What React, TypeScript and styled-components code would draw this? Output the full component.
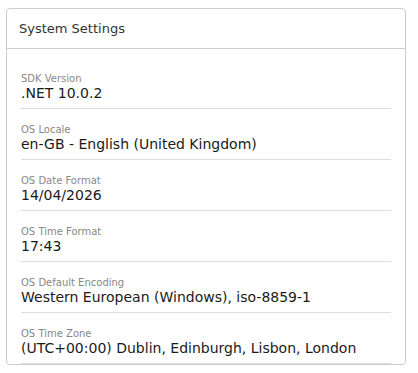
import { createGlobalStyle, styled } from 'styled-components';

interface Setting {
  label: string;
  value: string;
}

const settings: Setting[] = [
  { label: 'SDK Version', value: '.NET 10.0.2' },
  { label: 'OS Locale', value: 'en-GB - English (United Kingdom)' },
  { label: 'OS Date Format', value: '14/04/2026' },
  { label: 'OS Time Format', value: '17:43' },
  { label: 'OS Default Encoding', value: 'Western European (Windows), iso-8859-1' },
  { label: 'OS Time Zone', value: '(UTC+00:00) Dublin, Edinburgh, Lisbon, London' },
];

const App = () => {
  return (
    <>
      <GlobalStyle />
      <MyPanel>
        <MyPanelHeader>System Settings</MyPanelHeader>
        <MyPanelBody>
          {settings.map((setting) => (
            <MySettingRow key={setting.label}>
              <MySettingLabel>{setting.label}</MySettingLabel>
              <MySettingValue>{setting.value}</MySettingValue>
            </MySettingRow>
          ))}
        </MyPanelBody>
      </MyPanel>
    </>
  );
};

const GlobalStyle = createGlobalStyle`
  body {
    margin: 0;
    background: #ffffff;
    font-family: 'DejaVu Sans', 'Liberation Sans', sans-serif;
  }
`;

const MyPanel = styled.section`
  width: 400px;
  margin: 8px 0 0 6px;
  box-sizing: border-box;
  border: 1px solid #cccccc;
  border-radius: 4px;
  background: #ffffff;
`;

const MyPanelHeader = styled.h2`
  margin: 0;
  height: 39px;
  padding: 0 12px;
  display: flex;
  align-items: center;
  font-size: 13px;
  font-weight: normal;
  color: #333333;
  border-bottom: 1px solid #cccccc;
`;

const MyPanelBody = styled.div`
  display: flex;
  flex-direction: column;
  padding: 9px 14px 0;
`;

const MySettingRow = styled.div`
  display: flex;
  flex-direction: column;
  padding: 14px 0 6px;
  border-bottom: 1px solid #dddddd;
`;

const MySettingLabel = styled.span`
  font-size: 10px;
  line-height: 13px;
  color: #888888;
`;

const MySettingValue = styled.span`
  font-size: 14px;
  line-height: 17px;
  color: #1a1a1a;
`;

export default App;
